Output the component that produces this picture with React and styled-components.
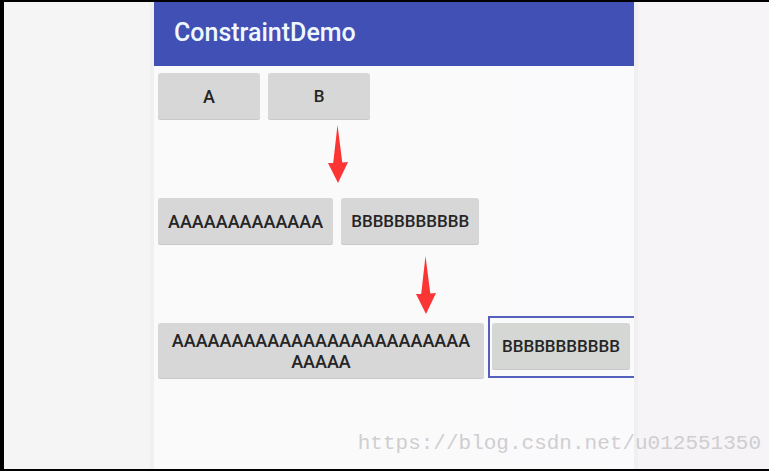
import React from "react";
import styled, { createGlobalStyle } from "styled-components";

const GlobalStyle = createGlobalStyle`
  * { box-sizing: border-box; }
  html, body { margin: 0; background: #000; }
  body { font-family: Roboto, sans-serif; }
`;

const Stage = styled.div`
  position: relative;
  display: grid;
  grid-template-columns: 10fr minmax(0, 480px) 9fr;
  min-height: 100vh;
  overflow: hidden;
  border: solid #000;
  border-width: 2px 0 2px 4px;
  background: linear-gradient(90deg, #f5f5f5 50%, #f6f4f6 50%);
`;

const Screen = styled.main`
  grid-column: 2;
  background: linear-gradient(90deg, #fafafa, #fafafc);
  box-shadow: 0 0 0 4px #f0f0f1;
`;

const AppBar = styled.header`
  display: flex;
  align-items: center;
  height: 64px;
  padding: 0 20px 2px;
  background: #4150b5;
`;

const Title = styled.h1`
  margin: 0;
  color: #f0f8ff;
  font-size: 25px;
  font-weight: 500;
  line-height: 32px;
`;

const Content = styled.div`
  display: flex;
  flex-direction: column;
  overflow: hidden;
  padding-top: 7px;
`;

const Row = styled.div`
  display: flex;
  align-items: flex-start;
  gap: 8px;
  padding-left: 4px;
`;

const Button = styled.button`
  flex: ${(p) => (p.$fill ? "1 1 0" : "none")};
  min-width: ${(p) => (p.$fill ? "0" : "102px")};
  min-height: 47px;
  padding: ${(p) => (p.$fill ? "7px 12px" : "0 10px")};
  border: 0;
  border-radius: 3px;
  background: ${(p) => (p.$selected ? "#d4d7d4" : "#d7d7d8")};
  box-shadow: inset 0 -1px 0 #c9c9ca;
  color: #252525;
  font: 500 ${(p) => (p.$compact ? 17 : 18)}px/21px Roboto, sans-serif;
  overflow-wrap: anywhere;
`;

const Selection = styled.div`
  flex: none;
  margin: -7px 0 0 -4px;
  padding: 5px 4px 6px 2px;
  border: 2px solid #5560bd;
  border-right: 0;
`;

const ArrowSpace = styled.div`
  display: flex;
  height: 78px;
  padding-top: ${(p) => p.$top}px;
  padding-left: ${(p) => p.$start}px;
`;

const Watermark = styled.div`
  position: absolute;
  right: 8px;
  bottom: 12px;
  color: #d0ced0;
  font: 21px/26px "Liberation Mono", monospace;
`;

function Arrow({ start, top }) {
  return (
    <ArrowSpace $start={start} $top={top}>
      <svg width="20" height="59" viewBox="0 0 20 59" aria-hidden="true">
        <path d="M9.5 0 14.3 37.5 20 37 10 58 0 38h5.2Z" fill="#fb3434" />
      </svg>
    </ArrowSpace>
  );
}

export default function App() {
  return (
    <>
      <GlobalStyle />
      <Stage>
        <Screen>
          <AppBar>
            <Title>ConstraintDemo</Title>
          </AppBar>
          <Content>
            <Row>
              <Button type="button">A</Button>
              <Button type="button" $compact>B</Button>
            </Row>
            <Arrow start={174} top={5} />
            <Row>
              <Button type="button">AAAAAAAAAAAAA</Button>
              <Button type="button" $compact>BBBBBBBBBBB</Button>
            </Row>
            <Arrow start={262} top={11} />
            <Row>
              <Button type="button" $fill>
                AAAAAAAAAAAAAAAAAAAAAAAAAAAAAA
              </Button>
              <Selection>
                <Button type="button" $compact $selected>
                  BBBBBBBBBBB
                </Button>
              </Selection>
            </Row>
          </Content>
        </Screen>
        <Watermark>https://blog.csdn.net/u012551350</Watermark>
      </Stage>
    </>
  );
}
